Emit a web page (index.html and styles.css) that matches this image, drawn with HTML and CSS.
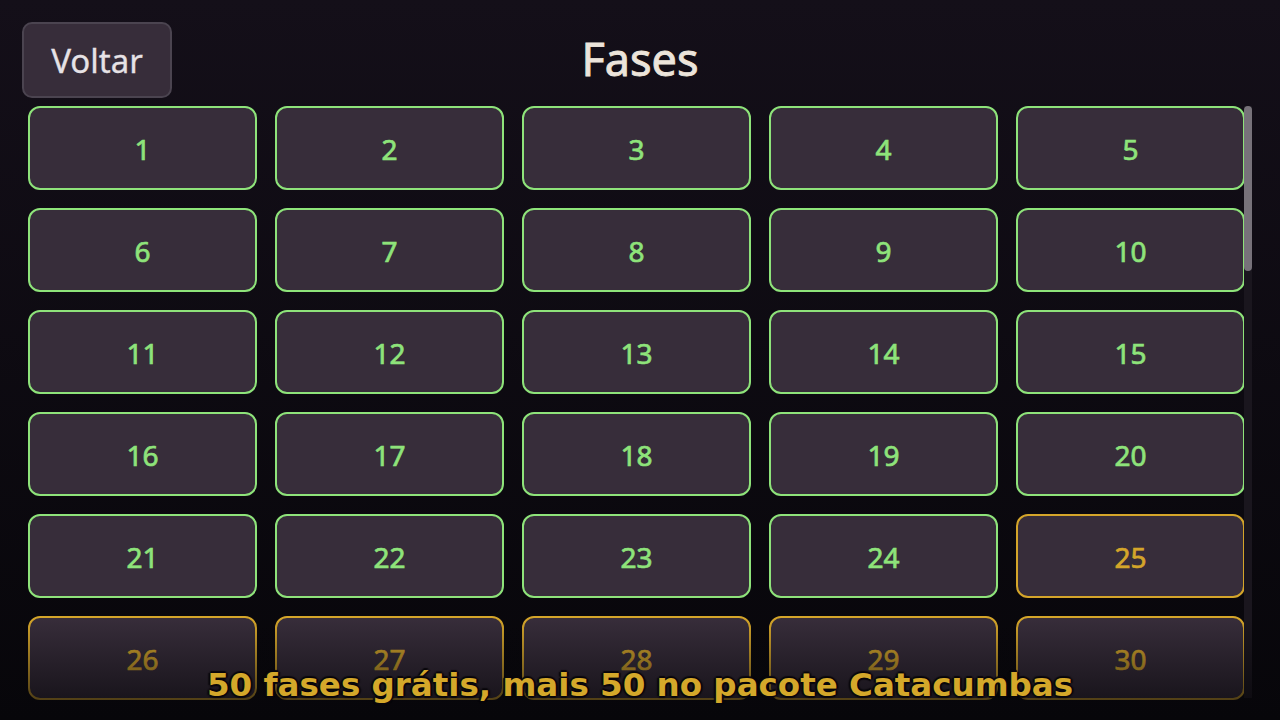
FILE: index.html
```html
<!DOCTYPE html>
<html lang="pt-BR">
<head>
    <meta charset="UTF-8">
    <meta name="viewport" content="width=device-width, initial-scale=1.0">
    <title>Fases</title>
    <link rel="stylesheet" href="styles.css">
</head>
<body>
    <div class="screen">
        <div class="header">
            <button class="back-button">Voltar</button>
            <h1>Fases</h1>
        </div>

        <div class="list">
            <div class="scroll" id="levels"></div>
            <div class="scrollbar"><div class="thumb"></div></div>
            <div class="fade"></div>
            <div class="notice">50 fases grátis, mais 50 no pacote Catacumbas</div>
        </div>
    </div>

    <script>
        // 100 fases, as primeiras 24 liberadas
        const levels = document.getElementById('levels');
        for (let i = 1; i <= 100; i++) {
            const cell = document.createElement('button');
            cell.className = i <= 24 ? 'level open' : 'level locked';
            cell.textContent = i;
            levels.appendChild(cell);
        }
    </script>
</body>
</html>
```

FILE: styles.css
```css
html, body { margin: 0; height: 100%; }
body { background: linear-gradient(#140f19, #07060a); font-family: "Noto Sans", "Open Sans", sans-serif; overflow: hidden; }
.screen { width: 1280px; height: 720px; display: flex; flex-direction: column; }

.header { position: relative; height: 98px; padding: 22px 0 0 22px; box-sizing: border-box; }
.back-button { width: 150px; height: 76px; background: #372d3a; border: 2px solid #4b4450; border-radius: 10px; color: #e6e2e6; font-family: inherit; font-size: 33px; padding: 1px 0 0; -webkit-text-stroke: 0.3px currentColor; }
h1 { position: absolute; left: 0; right: 0; top: 29px; margin: 0; text-align: center; font-size: 45px; font-weight: 400; line-height: 60px; color: #ece4da; -webkit-text-stroke: 0.9px currentColor; }

.list { position: relative; display: flex; margin: 8px 0 0 28px; width: 1224px; height: 596px; }
.scroll { width: 1216px; height: 100%; overflow: hidden; display: grid; grid-template-columns: repeat(5, 229px); grid-auto-rows: 84px; gap: 18px; }
.scrollbar { width: 8px; height: 592px; background: #1a161e; }
.thumb { height: 165px; background: #77727a; border-radius: 4px; }

.level { background: #372d3a; border: 2px solid; border-radius: 12px; font-family: inherit; font-size: 28px; font-weight: 400; padding: 2px 0 0; -webkit-text-stroke: 0.7px currentColor; }
.level.open { border-color: #8ee37a; color: #8ee37a; }
.level.locked { border-color: #d4a52a; color: #d4a52a; }

.fade { position: absolute; left: 0; right: 0; bottom: 0; height: 84px; background: linear-gradient(rgba(7,6,10,0), rgba(7,6,10,0.65)); pointer-events: none; }
.notice { position: absolute; left: -28px; right: -28px; bottom: -2px; text-align: center; font-family: "DejaVu Sans", sans-serif; font-weight: bold; font-size: 32.5px; color: #d4a82a; text-shadow: 0 0 2px #0a080c, 2px 0 1px #0a080c, -2px 0 1px #0a080c, 0 2px 1px #0a080c, 0 -2px 1px #0a080c; pointer-events: none; }
```
